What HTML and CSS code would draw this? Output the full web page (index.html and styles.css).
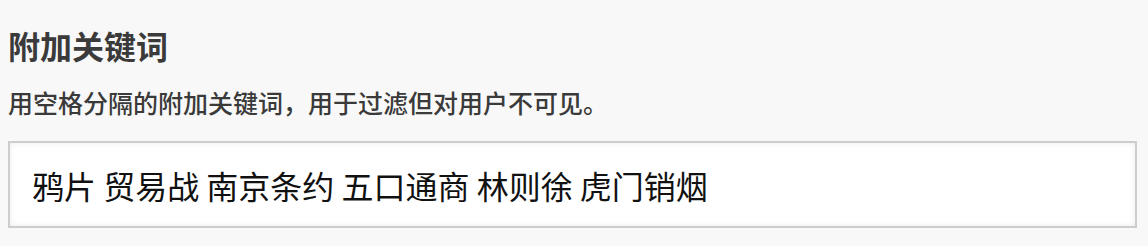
FILE: index.html
```html
<!DOCTYPE html>
<html lang="zh-CN">
<head>
    <meta charset="UTF-8">
    <meta name="viewport" content="width=device-width, initial-scale=1.0">
    <title>附加关键词</title>
    <link rel="stylesheet" href="styles.css">
</head>
<body>
    <div class="field">
        <h3 class="field-title">附加关键词</h3>
        <p class="field-help">用空格分隔的附加关键词，用于过滤但对用户不可见。</p>
        <input type="text" class="field-input" value="鸦片 贸易战 南京条约 五口通商 林则徐 虎门销烟">
    </div>
</body>
</html>
```

FILE: styles.css
```css
body {
    margin: 0;
    background-color: #f8f8f8;
    font-family: "Noto Sans CJK SC", "Noto Sans", sans-serif;
}

.field {
    padding: 22px 11px 0 8px;
}

.field-title {
    margin: 0;
    font-size: 32px;
    line-height: 46px;
    font-weight: bold;
    color: #3a3a3a;
}

.field-help {
    margin: 16px 0 0;
    font-size: 25px;
    line-height: 36px;
    font-weight: 500;
    color: #3a3a3a;
}

.field-input {
    display: block;
    box-sizing: border-box;
    width: 100%;
    height: 87px;
    margin-top: 21px;
    padding: 0 22px;
    font-family: "Noto Sans CJK SC", "Noto Sans", sans-serif;
    font-size: 32px;
    color: #111;
    background-color: #fff;
    border: 2px solid #cdcdcd;
    box-shadow: inset 0 0 6px rgba(0, 0, 0, 0.08);
    outline: none;
}
```
